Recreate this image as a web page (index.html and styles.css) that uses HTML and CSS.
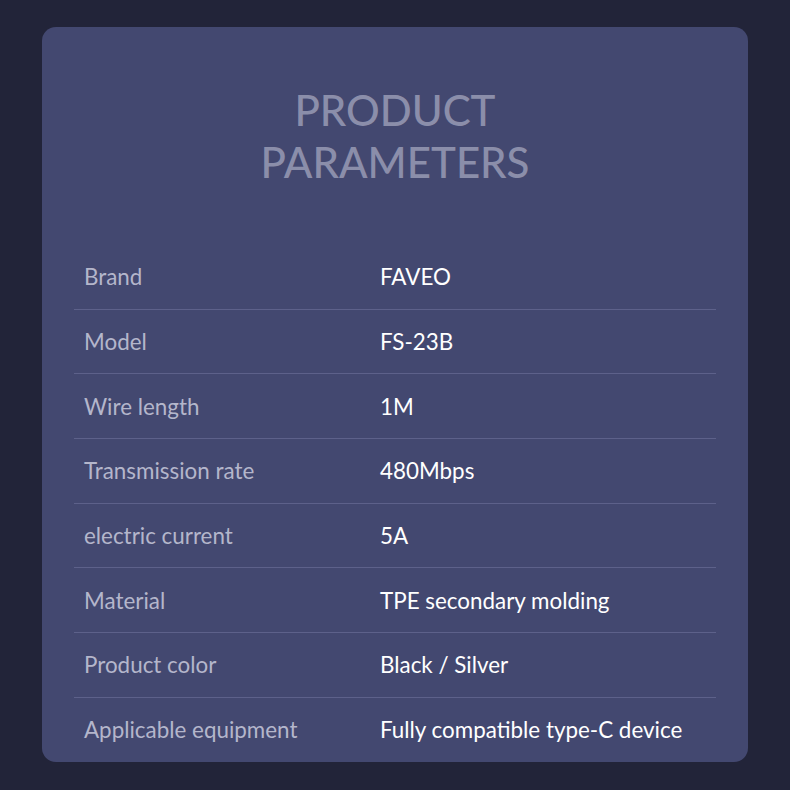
FILE: index.html
```html
<!DOCTYPE html>
<html lang="en">
<head>
    <meta charset="UTF-8">
    <meta name="viewport" content="width=device-width, initial-scale=1.0">
    <title>Product Parameters</title>
    <link rel="stylesheet" href="styles.css">
</head>
<body>
    <div class="card">
        <h1>PRODUCT<br>PARAMETERS</h1>
        <div class="params">
            <div class="row"><span class="label">Brand</span><span class="value">FAVEO</span></div>
            <div class="row"><span class="label">Model</span><span class="value">FS-23B</span></div>
            <div class="row"><span class="label">Wire length</span><span class="value">1M</span></div>
            <div class="row"><span class="label">Transmission rate</span><span class="value">480Mbps</span></div>
            <div class="row"><span class="label">electric current</span><span class="value">5A</span></div>
            <div class="row"><span class="label">Material</span><span class="value">TPE secondary molding</span></div>
            <div class="row"><span class="label">Product color</span><span class="value">Black / Silver</span></div>
            <div class="row"><span class="label">Applicable equipment</span><span class="value">Fully compatible type-C device</span></div>
        </div>
    </div>
</body>
</html>
```

FILE: styles.css
```css
body {
    font-family: Lato, 'Open Sans', sans-serif;
    background: #222439;
    margin: 0;
    padding: 27px 42px 28px;
}
.card {
    background: #434870;
    border-radius: 14px;
    padding: 57px 32px 0;
    height: 678px;
}
h1 {
    margin: 0 0 57px;
    text-align: center;
    font-size: 42px;
    font-weight: 500;
    line-height: 52px;
    color: #8b8eaa;
}
.row {
    display: flex;
    align-items: center;
    height: 63.7px;
    border-bottom: 1px solid #5d618a;
    font-size: 22.4px;
}
.row:last-child {
    border-bottom: none;
}
.label {
    width: 296px;
    padding-left: 10px;
    color: #b4b6cb;
}
.value {
    color: #fff;
}
```
